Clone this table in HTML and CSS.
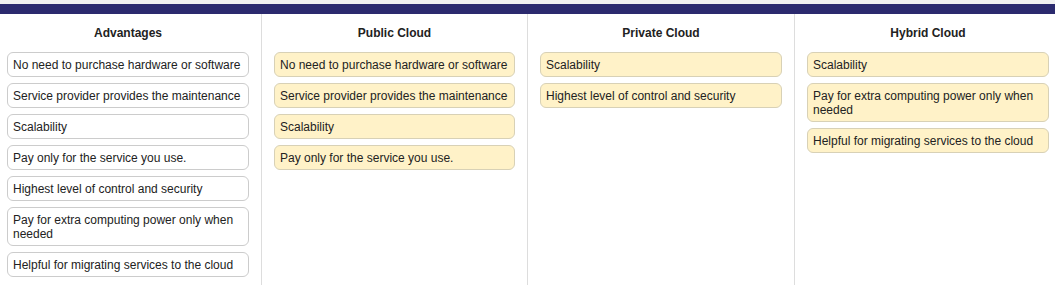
FILE: index.html
```html
<!DOCTYPE html>
<html lang="en">
<head>
    <meta charset="UTF-8">
    <meta name="viewport" content="width=device-width, initial-scale=1.0">
    <title>Cloud Models</title>
    <link rel="stylesheet" href="styles.css">
</head>
<body>
    <div class="topbar"></div>

    <div class="board">
        <div class="column">
            <h3>Advantages</h3>
            <div class="item">No need to purchase hardware or software</div>
            <div class="item">Service provider provides the maintenance</div>
            <div class="item">Scalability</div>
            <div class="item">Pay only for the service you use.</div>
            <div class="item">Highest level of control and security</div>
            <div class="item">Pay for extra computing power only when needed</div>
            <div class="item">Helpful for migrating services to the cloud</div>
        </div>

        <div class="column">
            <h3>Public Cloud</h3>
            <div class="item placed">No need to purchase hardware or software</div>
            <div class="item placed">Service provider provides the maintenance</div>
            <div class="item placed">Scalability</div>
            <div class="item placed">Pay only for the service you use.</div>
        </div>

        <div class="column">
            <h3>Private Cloud</h3>
            <div class="item placed">Scalability</div>
            <div class="item placed">Highest level of control and security</div>
        </div>

        <div class="column">
            <h3>Hybrid Cloud</h3>
            <div class="item placed">Scalability</div>
            <div class="item placed">Pay for extra computing power only when needed</div>
            <div class="item placed">Helpful for migrating services to the cloud</div>
        </div>
    </div>
</body>
</html>
```

FILE: styles.css
```css
:root {
    --navy: #2b2a6e;
    --line: #dddddd;
    --box-border: #cccccc;
    --placed-bg: #fff2c8;
    --placed-border: #d8d1b6;
    --text: #222222;
}

html, body {
    overflow: hidden;
}

body {
    margin: 0;
    font-family: "Liberation Sans", Arial, sans-serif;
    font-size: 12px;
    color: var(--text);
    background: #ffffff;
}

.topbar {
    height: 10px;
    border-top: 4px solid #f0f0f0;
    background-color: var(--navy);
}

/* columns are a little wider than the window, the board is shifted left */
.board {
    display: grid;
    grid-template-columns: 267px 266px 267px 266px;
    margin-left: -5px;
    min-height: calc(100vh - 14px);
}

.column {
    padding: 12px 12px 8px;
    border-right: 1px solid var(--line);
}

.column:last-child {
    border-right: none;
}

.column h3 {
    margin: 0 0 12px;
    font-size: 12px;
    line-height: 14px;
    font-weight: bold;
    text-align: center;
}

.item {
    background-color: #ffffff;
    border: 1px solid var(--box-border);
    border-radius: 6px;
    padding: 5px 5px 4px;
    line-height: 14px;
    margin-bottom: 6px;
}

.item.placed {
    background-color: var(--placed-bg);
    border-color: var(--placed-border);
}
```
